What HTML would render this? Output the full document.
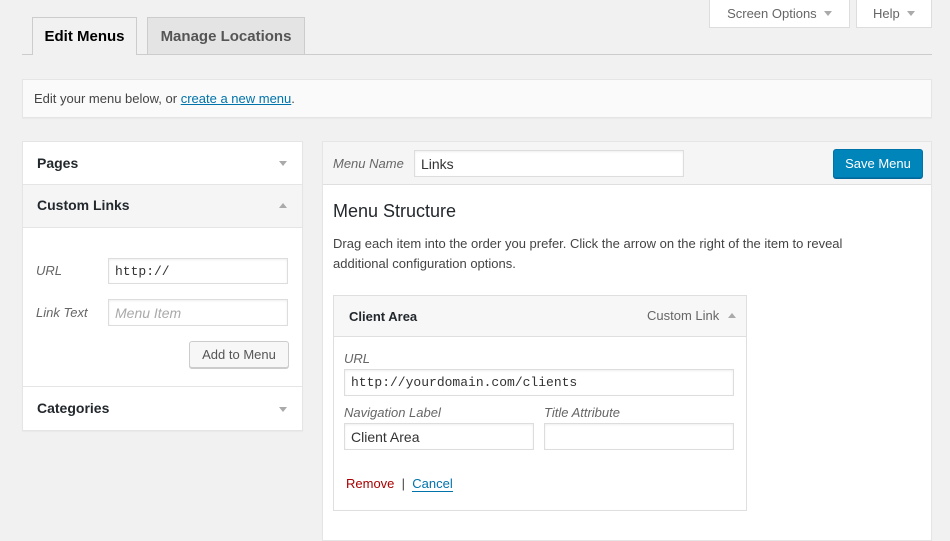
<!DOCTYPE html>
<html><head><style>
*{box-sizing:border-box;margin:0;padding:0}
body{width:950px;height:520px;overflow:hidden;background:#f1f1f1;font-family:"Liberation Sans",sans-serif;font-size:13px;color:#444;position:relative}
.a{position:absolute}
.btn{background:#fff;border:1px solid #ddd;border-top:none;color:#666;font-size:13px;display:flex;align-items:center;justify-content:center}
.tri-d{width:0;height:0;border-left:4px solid transparent;border-right:4px solid transparent;border-top:5px solid #aaa;display:inline-block}
.tri-u{width:0;height:0;border-left:4px solid transparent;border-right:4px solid transparent;border-bottom:5px solid #aaa;display:inline-block}
.box{background:#fff;border:1px solid #e5e5e5;box-shadow:0 1px 1px rgba(0,0,0,.04)}
.inp{background:#fff;border:1px solid #ddd;box-shadow:inset 0 1px 2px rgba(0,0,0,.07);font-size:14px;color:#333;padding:0 6px;display:flex;align-items:center}
.lbl{font-style:italic;color:#666;font-size:13px}
.hd{font-weight:bold;font-size:14px;color:#23282d}
</style></head><body>
<div class="a btn" style="left:709px;top:0;width:141px;height:28px">Screen Options&nbsp;&nbsp;<span class="tri-d"></span></div>
<div class="a btn" style="left:856px;top:0;width:76px;height:28px">Help&nbsp;&nbsp;<span class="tri-d"></span></div>
<div class="a" style="left:22px;top:54px;width:910px;height:1px;background:#ccc"></div>
<div class="a" style="left:32px;top:17px;width:105px;height:38px;border:1px solid #ccc;border-bottom:none;background:#f1f1f1;font-weight:bold;font-size:15px;color:#000;display:flex;align-items:center;justify-content:center">Edit Menus</div>
<div class="a" style="left:147px;top:17px;width:158px;height:37px;border:1px solid #ccc;border-bottom:none;background:#e4e4e4;font-weight:bold;font-size:15px;color:#555;display:flex;align-items:center;justify-content:center">Manage Locations</div>
<div class="a box" style="left:22px;top:79px;width:910px;height:39px;background:#fafafa;padding:11px 11px;font-size:13px;color:#444">Edit your menu below, or <span style="color:#0073aa;text-decoration:underline">create a new menu</span>.</div>

<div class="a box" style="left:22px;top:141px;width:281px;height:290px"></div>
<div class="a" style="left:23px;top:142px;width:279px;height:42px;padding:13px 14px" ><span class="hd">Pages</span><span class="tri-d" style="position:absolute;right:15px;top:19px"></span></div>
<div class="a" style="left:23px;top:184px;width:279px;height:44px;background:#f5f5f5;border-top:1px solid #e5e5e5;border-bottom:1px solid #e5e5e5;padding:12px 14px"><span class="hd">Custom Links</span><span class="tri-u" style="position:absolute;right:15px;top:18px"></span></div>
<div class="a lbl" style="left:36px;top:263px">URL</div>
<div class="a inp" style="left:108px;top:258px;width:180px;height:26px;font-family:'Liberation Mono',monospace;font-size:13px">http://</div>
<div class="a lbl" style="left:36px;top:305px">Link Text</div>
<div class="a inp" style="left:108px;top:299px;width:180px;height:27px;font-style:italic;color:#aaa">Menu Item</div>
<div class="a" style="left:189px;top:341px;width:100px;height:27px;background:#f7f7f7;border:1px solid #ccc;border-radius:3px;box-shadow:0 1px 0 #ccc;color:#555;display:flex;align-items:center;justify-content:center">Add to Menu</div>
<div class="a" style="left:23px;top:386px;width:279px;height:44px;border-top:1px solid #e5e5e5;padding:13px 14px"><span class="hd">Categories</span><span class="tri-d" style="position:absolute;right:15px;top:20px"></span></div>

<div class="a box" style="left:322px;top:141px;width:610px;height:400px"></div>
<div class="a" style="left:323px;top:142px;width:608px;height:43px;background:#f5f5f5;border-bottom:1px solid #dfdfdf"></div>
<div class="a lbl" style="left:333px;top:156px">Menu Name</div>
<div class="a inp" style="left:414px;top:150px;width:270px;height:27px">Links</div>
<div class="a" style="left:833px;top:149px;width:90px;height:29px;background:#0085ba;border:1px solid #0073aa;border-radius:3px;box-shadow:0 1px 0 #006799;color:#fff;font-size:13px;display:flex;align-items:center;justify-content:center">Save Menu</div>
<div class="a" style="left:333px;top:201px;font-size:18px;color:#23282d">Menu Structure</div>
<div class="a" style="left:333px;top:234px;width:560px;line-height:20px;font-size:13px;color:#444">Drag each item into the order you prefer. Click the arrow on the right of the item to reveal additional configuration options.</div>

<div class="a" style="left:333px;top:295px;width:414px;height:216px;border:1px solid #dfdfdf;background:#fff"></div>
<div class="a" style="left:334px;top:296px;width:412px;height:41px;background:#f7f7f7;border-bottom:1px solid #dfdfdf"></div>
<div class="a" style="left:349px;top:309px;font-weight:bold;font-size:13px;color:#23282d">Client Area</div>
<div class="a" style="left:647px;top:308px;color:#666;font-size:13px">Custom Link</div>
<span class="a tri-u" style="left:728px;top:313px"></span>
<div class="a lbl" style="left:344px;top:351px">URL</div>
<div class="a inp" style="left:344px;top:369px;width:390px;height:27px;font-family:'Liberation Mono',monospace;font-size:13px">http://yourdomain.com/clients</div>
<div class="a lbl" style="left:344px;top:405px">Navigation Label</div>
<div class="a lbl" style="left:544px;top:405px">Title Attribute</div>
<div class="a inp" style="left:344px;top:423px;width:190px;height:27px">Client Area</div>
<div class="a inp" style="left:544px;top:423px;width:190px;height:27px"></div>
<div class="a" style="left:346px;top:476px;font-size:13px"><span style="color:#a00">Remove</span> <span style="color:#444">&nbsp;|&nbsp;</span> <span style="color:#0073aa;border-bottom:1px solid #0073aa">Cancel</span></div>
</body></html>
